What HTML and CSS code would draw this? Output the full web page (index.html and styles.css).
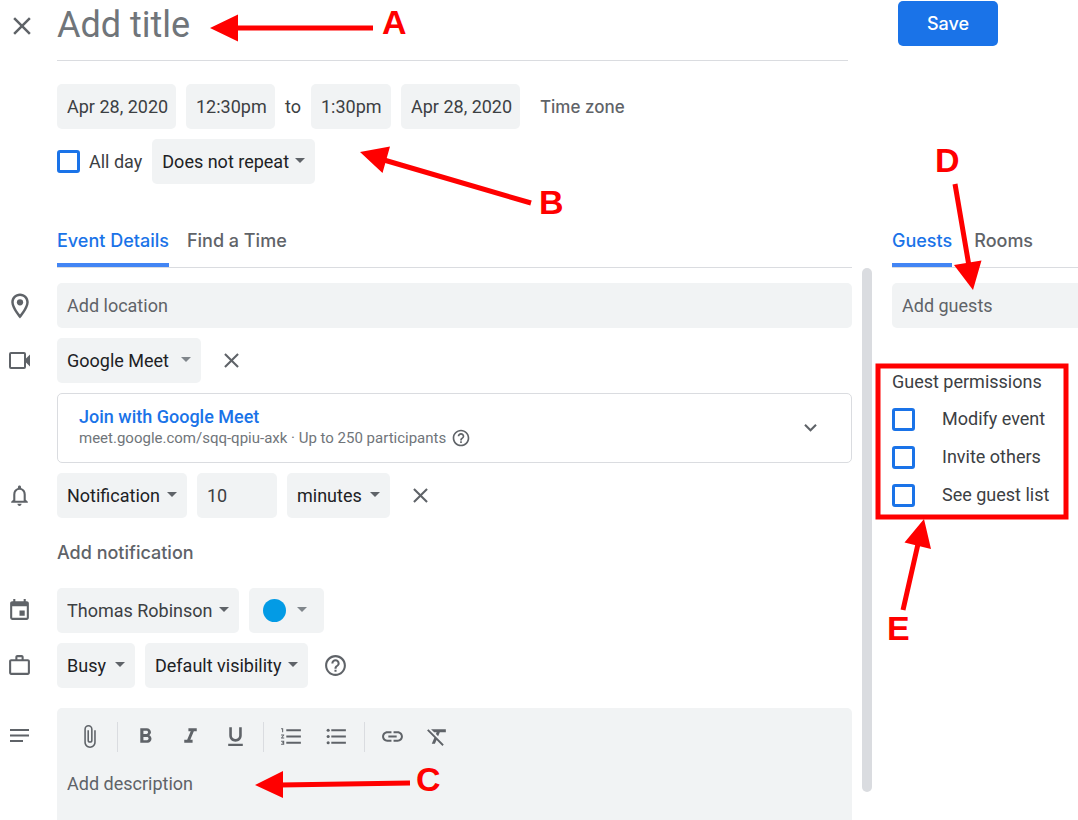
FILE: index.html
```
<!DOCTYPE html>
<html lang="en">
  <head>
    <meta charset="UTF-8" />
    <meta name="viewport" content="width=device-width, initial-scale=1.0" />
    <title>Add event</title>
    <link rel="stylesheet" href="styles.css">
  </head>
  <body>
    <form class="page">
      <header class="top">
        <button type="button" class="icon-btn close" aria-label="Close">
          <svg width="30" height="30" viewBox="0 0 24 24"><path d="M19 6.41L17.59 5 12 10.59 6.41 5 5 6.41 10.59 12 5 17.59 6.41 19 12 13.41 17.59 19 19 17.59 13.41 12z" /></svg>
        </button>
        <input type="text" class="title" placeholder="Add title" aria-label="Title" />
      </header>
      <div class="save-box">
        <button type="button" class="save">Save</button>
      </div>

      <section class="when">
        <div class="row">
          <input type="text" class="field date" value="Apr 28, 2020" aria-label="Start date" />
          <input type="text" class="field start" value="12:30pm" aria-label="Start time" />
          <span>to</span>
          <input type="text" class="field end" value="1:30pm" aria-label="End time" />
          <input type="text" class="field date" value="Apr 28, 2020" aria-label="End date" />
          <button type="button" class="text-btn zone">Time zone</button>
        </div>
        <div class="row">
          <label class="check"><input type="checkbox" />All day</label>
          <select class="field" aria-label="Repeat"><option>Does not repeat</option></select>
        </div>
      </section>

      <nav class="tabs main-tabs">
        <button type="button" class="tab active">Event Details</button>
        <button type="button" class="tab">Find a Time</button>
      </nav>
      <nav class="tabs side-tabs">
        <button type="button" class="tab active">Guests</button>
        <button type="button" class="tab">Rooms</button>
      </nav>

      <main class="details">
        <div class="line">
          <svg class="icon" width="30" height="30" viewBox="0 0 24 24"><path d="M12 2C8.13 2 5 5.13 5 9c0 5.25 7 13 7 13s7-7.75 7-13c0-3.87-3.13-7-7-7zM7 9c0-2.76 2.24-5 5-5s5 2.24 5 5c0 2.88-2.88 7.19-5 9.88C9.92 16.21 7 11.85 7 9z" /><circle cx="12" cy="9" r="2.5" /></svg>
          <input type="text" class="field wide" placeholder="Add location" aria-label="Location" />
        </div>

        <div class="line">
          <svg class="icon" width="25" height="25" viewBox="0 0 25 25"><path d="M4 4h13a2 2 0 0 1 2 2v4.500l4-4v12l-4-4V19a2 2 0 0 1-2 2H4a2 2 0 0 1-2-2V6a2 2 0 0 1 2-2zm0 2v13h13V6z" /></svg>
          <select class="field light" aria-label="Conferencing"><option>Google Meet</option></select>
          <button type="button" class="icon-btn remove" aria-label="Remove conferencing">
            <svg width="25" height="25" viewBox="0 0 24 24"><path d="M19 6.41L17.59 5 12 10.59 6.41 5 5 6.41 10.59 12 5 17.59 6.41 19 12 13.41 17.59 19 19 17.59 13.41 12z" /></svg>
          </button>
        </div>

        <div class="meet">
          <div>
            <a href="#" class="join">Join with Google Meet</a>
            <p class="info">
              meet.google.com/sqq-qpiu-axk · Up to 250 participants
              <svg width="20" height="20" viewBox="0 0 24 24"><path d="M11 18h2v-2h-2v2zm1-16C6.480 2 2 6.480 2 12s4.480 10 10 10 10-4.480 10-10S17.520 2 12 2zm0 18c-4.410 0-8-3.590-8-8s3.590-8 8-8 8 3.590 8 8-3.590 8-8 8zm0-14c-2.210 0-4 1.790-4 4h2c0-1.100.9-2 2-2s2 .9 2 2c0 2-3 1.750-3 5h2c0-2.250 3-2.500 3-5 0-2.210-1.790-4-4-4z" /></svg>
            </p>
          </div>
          <button type="button" class="icon-btn" aria-label="Show joining info">
            <svg width="25" height="25" viewBox="0 0 24 24"><path d="M16.590 8.590L12 13.170 7.410 8.590 6 10l6 6 6-6z" /></svg>
          </button>
        </div>

        <div class="line">
          <svg class="icon" width="25" height="25" viewBox="0 0 24 24"><path d="M12 22c1.100 0 2-.9 2-2h-4c0 1.100.9 2 2 2zm6-6v-5c0-3.070-1.630-5.640-4.500-6.320V4c0-.83-.67-1.500-1.500-1.500s-1.500.67-1.500 1.500v.68C7.640 5.360 6 7.920 6 11v5l-2 2v1h16v-1l-2-2zm-2 1H8v-6c0-2.480 1.510-4.500 4-4.500s4 2.020 4 4.500v6z" /></svg>
          <select class="field" aria-label="Notification type"><option>Notification</option></select>
          <input type="text" class="field amount" value="10" aria-label="Amount" />
          <select class="field unit" aria-label="Unit"><option>minutes</option></select>
          <button type="button" class="icon-btn remove" aria-label="Remove notification">
            <svg width="25" height="25" viewBox="0 0 24 24"><path d="M19 6.41L17.59 5 12 10.59 6.41 5 5 6.41 10.59 12 5 17.59 6.41 19 12 13.41 17.59 19 19 17.59 13.41 12z" /></svg>
          </button>
        </div>

        <button type="button" class="text-btn add">Add notification</button>

        <div class="line">
          <svg class="icon" width="25" height="25" viewBox="0 0 24 24"><path d="M12 12h5v5h-5zM16 1v2H8V1H6v2H5c-1.110 0-2 .9-2 2v14a2 2 0 0 0 2 2h14c1.100 0 2-.9 2-2V5c0-1.100-.9-2-2-2h-1V1h-2zm3 18H5V8h14v11z" /></svg>
          <select class="field owner" aria-label="Calendar"><option>Thomas Robinson</option></select>
          <button type="button" class="field color" aria-label="Event color"><span class="dot"></span></button>
        </div>

        <div class="line">
          <svg class="icon" width="25" height="25" viewBox="0 0 24 24"><path d="M14 6V4h-4v2h4zM4 8v11h16V8H4zm16-2c1.110 0 2 .89 2 2v11c0 1.110-.89 2-2 2H4c-1.110 0-2-.89-2-2V8c0-1.110.89-2 2-2h4V4c0-1.110.89-2 2-2h4c1.110 0 2 .89 2 2v2h4z" /></svg>
          <select class="field busy" aria-label="Availability"><option>Busy</option></select>
          <select class="field" aria-label="Visibility"><option>Default visibility</option></select>
          <button type="button" class="icon-btn help" aria-label="Help">
            <svg width="25" height="25" viewBox="0 0 24 24"><path d="M11 18h2v-2h-2v2zm1-16C6.480 2 2 6.480 2 12s4.480 10 10 10 10-4.480 10-10S17.520 2 12 2zm0 18c-4.410 0-8-3.590-8-8s3.590-8 8-8 8 3.590 8 8-3.590 8-8 8zm0-14c-2.210 0-4 1.790-4 4h2c0-1.100.9-2 2-2s2 .9 2 2c0 2-3 1.750-3 5h2c0-2.250 3-2.500 3-5 0-2.210-1.790-4-4-4z" /></svg>
          </button>
        </div>

        <div class="line notes">
          <svg class="icon" width="25" height="25" viewBox="0 0 25 25"><path d="M3 6h19v2H3zM3 11.500h19v2H3zM3 17h13v2H3z" /></svg>
          <div class="editor">
            <div class="toolbar">
              <button type="button" aria-label="Attach"><svg width="25" height="25" viewBox="0 0 24 24"><path d="M16.500 6v11.500c0 2.210-1.790 4-4 4s-4-1.790-4-4V5a2.500 2.500 0 0 1 5 0v10.500c0 .55-.45 1-1 1s-1-.45-1-1V6H10v9.500a2.500 2.500 0 0 0 5 0V5c0-2.210-1.790-4-4-4S7 2.790 7 5v12.500c0 3.040 2.460 5.500 5.500 5.500s5.500-2.460 5.500-5.500V6h-1.500z" /></svg></button>
              <i class="sep"></i>
              <button type="button" aria-label="Bold"><svg width="25" height="25" viewBox="0 0 24 24"><path d="M15.600 10.790c.97-.67 1.650-1.770 1.650-2.790 0-2.260-1.750-4-4-4H7v14h7.040c2.090 0 3.710-1.700 3.710-3.790 0-1.520-.86-2.820-2.150-3.420zM10 6.500h3c.83 0 1.500.67 1.500 1.500s-.67 1.500-1.500 1.500h-3v-3zm3.500 9H10v-3h3.500c.83 0 1.500.67 1.500 1.500s-.67 1.500-1.500 1.500z" /></svg></button>
              <button type="button" aria-label="Italic"><svg width="25" height="25" viewBox="0 0 24 24"><path d="M10 4v3h2.210l-3.420 8H6v3h8v-3h-2.210l3.420-8H18V4z" /></svg></button>
              <button type="button" aria-label="Underline"><svg width="25" height="25" viewBox="0 0 24 24"><path d="M12 17c3.310 0 6-2.690 6-6V3h-2.500v8c0 1.930-1.570 3.500-3.500 3.500S8.500 12.930 8.500 11V3H6v8c0 3.310 2.690 6 6 6zm-7 2v2h14v-2H5z" /></svg></button>
              <i class="sep"></i>
              <button type="button" aria-label="Numbered list"><svg width="25" height="25" viewBox="0 0 24 24"><path d="M2 17h2v.5H3v1h1v.5H2v1h3v-4H2v1zm1-9h1V4H2v1h1v3zm-1 3h1.800L2 13.100v.9h3v-1H3.200L5 10.900V10H2v1zm5-6v2h14V5H7zm0 14h14v-2H7v2zm0-6h14v-2H7v2z" /></svg></button>
              <button type="button" aria-label="Bulleted list"><svg width="25" height="25" viewBox="0 0 24 24"><path d="M7 5h14v2H7zM7 11h14v2H7zM7 17h14v2H7z" /><circle cx="4" cy="6" r="1.500" /><circle cx="4" cy="12" r="1.500" /><circle cx="4" cy="18" r="1.500" /></svg></button>
              <i class="sep"></i>
              <button type="button" aria-label="Insert link"><svg width="25" height="25" viewBox="0 0 24 24"><path d="M3.900 12c0-1.710 1.390-3.100 3.100-3.100h4V7H7c-2.760 0-5 2.240-5 5s2.240 5 5 5h4v-1.900H7c-1.710 0-3.100-1.390-3.100-3.100zM8 13h8v-2H8v2zm9-6h-4v1.900h4c1.710 0 3.100 1.390 3.100 3.100s-1.390 3.100-3.100 3.100h-4V17h4c2.760 0 5-2.240 5-5s-2.240-5-5-5z" /></svg></button>
              <button type="button" aria-label="Remove formatting"><svg width="25" height="25" viewBox="0 0 24 24"><path d="M3.270 5L2 6.270l6.970 6.970L6.500 19h3l1.570-3.660L16.730 21 18 19.730 3.550 5.270 3.270 5zM6 5v.18L8.820 8h2.400l-.72 1.680 2.100 2.100L14.210 8H20V5H6z" /></svg></button>
            </div>
            <textarea placeholder="Add description" aria-label="Description"></textarea>
          </div>
        </div>
      </main>

      <div class="scrollbar"></div>

      <aside class="guests">
        <input type="text" class="field wide" placeholder="Add guests" aria-label="Guests" />
        <fieldset class="permissions">
          <legend>Guest permissions</legend>
          <label class="check"><input type="checkbox" />Modify event</label>
          <label class="check"><input type="checkbox" />Invite others</label>
          <label class="check"><input type="checkbox" />See guest list</label>
        </fieldset>
      </aside>
    </form>

    <!-- callouts drawn over the form -->
    <svg class="callouts" width="1078" height="820" viewBox="0 0 1078 820">
      <path class="stem" d="M373 28H234M531 203L384 160M410 783L280 785M955 184L969 266M903 610L918 544" />
      <path class="head" d="M210 28l28-13.500v27zM360 152l30-5.500-7.500 26.500zM255 785l28-14v27zM973 290l-19-25 27.500-4.500zM924 519l-19.500 23.500 26.500 6.500z" />
      <rect class="stem" x="878" y="366" width="188" height="151" />
      <text x="382" y="34">A</text>
      <text x="539" y="214">B</text>
      <text x="416" y="791">C</text>
      <text x="935" y="172">D</text>
      <text x="887" y="640">E</text>
    </svg>
  </body>
</html>
```

FILE: styles.css
```
* {
  box-sizing: border-box;
}
body {
  margin: 0;
  background: #fff;
  color: #3c4043;
  font-family: Roboto, Arial, sans-serif;
  font-size: 18px;
  line-height: 24px;
}
input,
select,
button,
textarea {
  font: inherit;
  color: inherit;
  border: none;
  margin: 0;
  padding: 0;
  background: none;
}
button {
  cursor: pointer;
}
svg {
  fill: #5f6368;
}
::placeholder {
  color: #5f6368;
  opacity: 1;
}
.page {
  display: grid;
  grid-template-columns: minmax(0, 1fr) 40px 186px;
}

/* title bar */
.top {
  display: flex;
  height: 61px;
  padding-right: 4px;
}
.icon-btn {
  display: flex;
  align-items: center;
  justify-content: center;
}
.close {
  width: 57px;
  height: 52px;
  padding-right: 13px;
}
.title {
  flex: 1;
  min-width: 0;
  padding-bottom: 10px;
  border-bottom: 1px solid #dadce0;
  font-size: 36px;
  line-height: 48px;
}
.title::placeholder {
  color: #70757a;
}
.save-box {
  grid-column: 3;
  padding: 1px 0 0 6px;
}
.save {
  width: 100px;
  height: 45px;
  border-radius: 5px;
  background: #1a73e8;
  color: #fff;
}
.save,
.tab,
.text-btn {
  font-family: Inter, Roboto, sans-serif;
  font-size: 18px;
  font-weight: 500;
}

/* date and time */
.when {
  grid-column: 1;
  display: flex;
  flex-direction: column;
  gap: 10px;
  padding: 23px 0 0 57px;
}
.row {
  display: flex;
  align-items: center;
  gap: 10px;
}
.field {
  height: 45px;
  padding: 0 0 0 10px;
  border-radius: 5px;
  background-color: #f1f3f4;
}
select.field,
.color {
  appearance: none;
  padding-right: 26px;
  color: #202124;
  background-image: url("data:image/svg+xml,%3Csvg xmlns='http://www.w3.org/2000/svg' width='10' height='5'%3E%3Cpath d='M0 0h10L5 5z' fill='%235f6368'/%3E%3C/svg%3E");
  background-repeat: no-repeat;
  background-position: right 10px top 19px;
}
select.owner {
  color: #3c4043;
}
select.light {
  padding-right: 32px;
}
select.light,
.color {
  background-image: url("data:image/svg+xml,%3Csvg xmlns='http://www.w3.org/2000/svg' width='10' height='5'%3E%3Cpath d='M0 0h10L5 5z' fill='%2380868b'/%3E%3C/svg%3E");
}
.busy {
  min-width: 78px;
}
.unit {
  min-width: 103px;
}
.date {
  width: 119px;
}
.start {
  width: 89px;
}
.end,
.amount {
  width: 80px;
}
.text-btn {
  color: #5f6368;
}
.zone {
  margin-left: 10px;
  font-size: 17px;
}
.check {
  display: flex;
  align-items: center;
  gap: 9px;
}
.check input {
  appearance: none;
  width: 23px;
  height: 23px;
  border: 3px solid #1a73e8;
  border-radius: 3px;
}

/* tabs */
.tabs {
  display: flex;
  height: 52px;
  margin-top: 32px;
  border-bottom: 1px solid #dadce0;
}
.main-tabs {
  grid-column: 1;
  gap: 18px;
  margin-left: 57px;
}
.side-tabs {
  grid-column: 3;
  gap: 22px;
}
.tab {
  height: 51px;
  padding-top: 2px;
  border-bottom: 4px solid transparent;
  color: #5f6368;
}
.tab.active {
  border-color: #4285f4;
  border-radius: 2px 2px 0 0;
  color: #1a73e8;
}

/* event details */
.details {
  grid-column: 1;
  display: flex;
  flex-direction: column;
  gap: 10px;
  padding-top: 15px;
}
.line {
  display: flex;
  align-items: center;
  gap: 10px;
  padding-left: 57px;
}
.icon {
  flex: none;
  margin-left: -50px;
  margin-right: 15px;
}
.icon[width="30"] {
  margin-left: -52px;
  margin-right: 12px;
}
.wide {
  flex: 1;
  min-width: 0;
  width: 100%;
}
.remove {
  width: 40px;
  height: 45px;
}
.help {
  width: 35px;
  height: 45px;
}
.meet {
  display: flex;
  align-items: center;
  justify-content: space-between;
  height: 70px;
  margin-left: 57px;
  padding: 0 28px 2px 21px;
  border: 1px solid #dadce0;
  border-radius: 5px;
}
.join {
  display: block;
  color: #1a73e8;
  font-weight: 500;
  line-height: 22px;
  text-decoration: none;
}
.info {
  display: flex;
  align-items: center;
  gap: 5px;
  margin: 0;
  color: #70757a;
  font-size: 15px;
  line-height: 20px;
}
.add {
  align-self: flex-start;
  height: 50px;
  margin-left: 57px;
}
.color {
  display: flex;
  align-items: center;
  width: 75px;
  padding-left: 14px;
  background-position: right 17px top 19px;
}
.dot {
  width: 23px;
  height: 23px;
  border-radius: 50%;
  background: #039be5;
}
.notes {
  align-items: flex-start;
  margin-top: 10px;
}
.notes .icon {
  margin-top: 15px;
}
.editor {
  flex: 1;
  min-width: 0;
  padding: 6px 10px 0;
  border-radius: 5px 5px 0 0;
  background: #f1f3f4;
}
.toolbar {
  display: flex;
  align-items: center;
}
.toolbar button {
  display: flex;
  align-items: center;
  justify-content: center;
  width: 45px;
  height: 45px;
}
.sep {
  width: 1px;
  height: 30px;
  margin: 0 5px;
  background: #dadce0;
}
.editor textarea {
  display: block;
  width: 100%;
  height: 48px;
  margin-top: 13px;
  resize: none;
}
.scrollbar {
  grid-column: 2;
  width: 10px;
  height: 524px;
  margin-left: 10px;
  border-radius: 5px;
  background: #dadce0;
}

/* guests */
.guests {
  grid-column: 3;
  padding-top: 15px;
}
.guests .field {
  border-radius: 5px 0 0 5px;
}
.permissions {
  display: flex;
  flex-direction: column;
  gap: 14px;
  margin: 42px 0 0;
  padding: 0;
  border: none;
}
.permissions legend {
  padding: 0 0 13px;
}
.permissions .check {
  gap: 27px;
}

/* callouts */
.callouts {
  position: absolute;
  top: 0;
  left: 0;
  pointer-events: none;
}
.callouts .stem {
  fill: none;
  stroke: #f00;
  stroke-width: 5;
}
.callouts .head {
  fill: #f00;
}
.callouts text {
  fill: #f00;
  font-family: "Liberation Sans", Arial, sans-serif;
  font-size: 34px;
  font-weight: bold;
}
```
